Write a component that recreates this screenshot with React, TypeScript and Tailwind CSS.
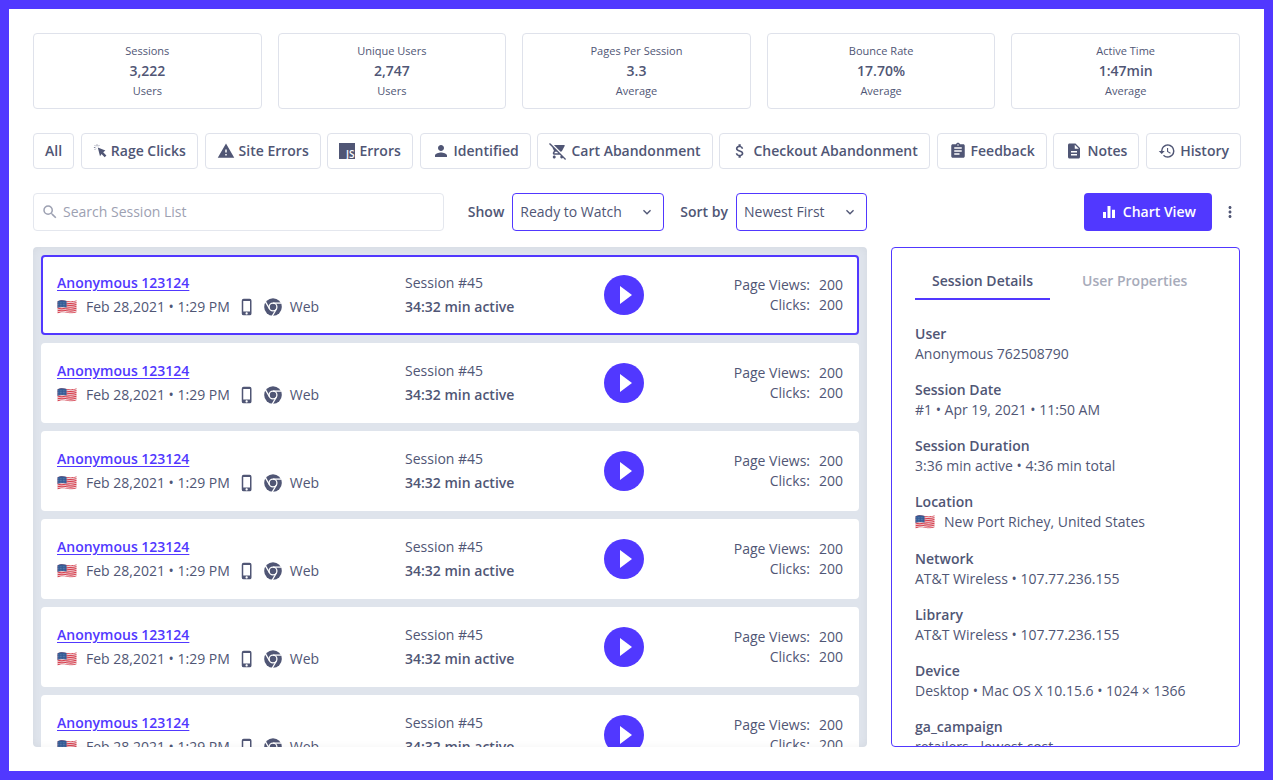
import React from "react";
import {
  MdWarning,
  MdPerson,
  MdRemoveShoppingCart,
  MdAttachMoney,
  MdAssignment,
  MdDescription,
  MdHistory,
  MdSearch,
  MdEqualizer,
  MdMoreVert,
  MdPhoneIphone,
  MdExpandMore,
} from "react-icons/md";

function RageIcon() {
  return (
    <svg width="14" height="16" viewBox="0 0 14 16" aria-hidden="true">
      <path
        d="M4.800 4.400 12.400 7.600 10.200 9.200 13.400 12.600 11.700 14.300 8.500 11 7 13.300Z"
        fill="currentColor"
      />
      <path
        d="M4 1.400v1.500M1.800 2.300l1 1M.9 4.500h1.500M6.200 2.300l-1 1M1.800 6.700l1-1"
        stroke="currentColor"
        strokeWidth=".7"
        fill="none"
      />
    </svg>
  );
}

function JsIcon() {
  return (
    <svg width="16" height="16" viewBox="0 0 16 16" aria-hidden="true">
      <rect width="16" height="16" fill="currentColor" />
      <text
        x="15.500"
        y="14.800"
        textAnchor="end"
        fontSize="10"
        fontWeight="600"
        fontFamily="'Open Sans', sans-serif"
        fill="#fff"
      >
        JS
      </text>
    </svg>
  );
}

function ChromeIcon() {
  return (
    <svg width="18" height="18" viewBox="0 0 18 18" className="ml-2" aria-hidden="true">
      <circle cx="9" cy="9" r="8.800" fill="currentColor" />
      <circle cx="9" cy="9" r="3.900" fill="none" stroke="#fff" strokeWidth="1.300" />
      <g stroke="#fff" strokeWidth="1.300">
        <path d="M9 5.100H17.500" />
        <path d="M9 5.100H17.500" transform="rotate(120 9 9)" />
        <path d="M9 5.100H17.500" transform="rotate(240 9 9)" />
      </g>
    </svg>
  );
}

function FlagIcon() {
  return (
    <svg width="20" height="16" viewBox="0 0 20 16" role="img" aria-label="United States">
      <clipPath id="flag-wave">
        <path d="M.5 2.400C4 .8 6.500 1.400 10 2S16 2.600 19.500 1.200V13.300C16 14.800 13.500 14.400 10 13.800S4 13 .5 14.600Z" />
      </clipPath>
      <g clipPath="url(#flag-wave)">
        <rect width="20" height="16" fill="#f0e2e4" />
        <g stroke="#d8404f" strokeWidth="1.100" fill="none">
          <path d="M0 2.500C4 .9 6.500 1.700 10 2.300S16 3 20 1.500" />
          <path d="M0 4.400C4 2.800 6.500 3.600 10 4.200S16 4.900 20 3.400" />
          <path d="M0 6.300C4 4.700 6.500 5.500 10 6.100S16 6.800 20 5.300" />
          <path d="M0 8.200C4 6.600 6.500 7.400 10 8S16 8.700 20 7.200" />
          <path d="M0 10.100C4 8.500 6.500 9.300 10 9.900S16 10.600 20 9.100" />
          <path d="M0 12C4 10.400 6.500 11.200 10 11.800S16 12.500 20 11" />
          <path d="M0 14C4 12.400 6.500 13.200 10 13.700S16 14.400 20 12.900" />
        </g>
        <path d="M0 0H9.500V8.600C6.500 8 4 7.700 0 9.100Z" fill="#345b95" />
        <path
          d="M1.500 3.800h7M1.500 5.500h7M1.500 7.200h7"
          stroke="#8fa9cc"
          strokeWidth=".5"
          strokeDasharray=".7 .8"
        />
      </g>
    </svg>
  );
}

const stats = [
  ["Sessions", "3,222", "Users"],
  ["Unique Users", "2,747", "Users"],
  ["Pages Per Session", "3.3", "Average"],
  ["Bounce Rate", "17.70%", "Average"],
  ["Active Time", "1:47min", "Average"],
];

const filters: { label: string; icon?: React.ReactNode }[] = [
  { label: "All" },
  { label: "Rage Clicks", icon: <RageIcon /> },
  { label: "Site Errors", icon: <MdWarning size={18} /> },
  { label: "Errors", icon: <JsIcon /> },
  { label: "Identified", icon: <MdPerson size={18} /> },
  { label: "Cart Abandonment", icon: <MdRemoveShoppingCart size={18} /> },
  { label: "Checkout Abandonment", icon: <MdAttachMoney size={18} /> },
  { label: "Feedback", icon: <MdAssignment size={18} /> },
  { label: "Notes", icon: <MdDescription size={18} /> },
  { label: "History", icon: <MdHistory size={18} /> },
];

const details: { label: string; value: string; flag?: boolean }[] = [
  { label: "User", value: "Anonymous 762508790" },
  { label: "Session Date", value: "#1 • Apr 19, 2021 • 11:50 AM" },
  { label: "Session Duration", value: "3:36 min active • 4:36 min total" },
  { label: "Location", value: "New Port Richey, United States", flag: true },
  { label: "Network", value: "AT&T Wireless • 107.77.236.155" },
  { label: "Library", value: "AT&T Wireless • 107.77.236.155" },
  { label: "Device", value: "Desktop • Mac OS X 10.15.6 • 1024 × 1366" },
  { label: "ga_campaign", value: "retailers - lowest cost" },
];

function Picker({ id, label, value }: { id: string; label: string; value: string }) {
  return (
    <div className="flex shrink-0 items-center gap-2">
      <label htmlFor={id} className="font-semibold">
        {label}
      </label>
      <div className="relative">
        <select
          id={id}
          defaultValue={value}
          className="h-[38px] appearance-none rounded border border-[#5138ff] bg-white pr-[41px] pl-[7px]"
        >
          <option>{value}</option>
        </select>
        <MdExpandMore size={16} className="pointer-events-none absolute top-[11px] right-[9px]" />
      </div>
    </div>
  );
}

function SessionCard({ selected }: { selected: boolean }) {
  return (
    <li
      className={`grid h-20 shrink-0 grid-cols-[348fr_199fr_239fr] items-center rounded border-2 bg-white px-[14px] ${
        selected ? "border-[#5138ff]" : "border-white"
      }`}
    >
      <div className="leading-6">
        <a href="#session" className="font-semibold text-[#5138ff] underline underline-offset-2">
          Anonymous 123124
        </a>
        <div className="flex items-center">
          <FlagIcon />
          <span className="ml-[9px]">Feb 28,2021 • 1:29 PM</span>
          <MdPhoneIphone size={18} className="ml-2" />
          <ChromeIcon />
          <span className="ml-2">Web</span>
        </div>
      </div>
      <div className="leading-6">
        <p>Session #45</p>
        <p className="font-semibold">34:32 min active</p>
      </div>
      <div className="flex items-center justify-between">
        <button
          type="button"
          aria-label="Play session"
          className="flex size-10 items-center justify-center rounded-full bg-[#5138ff] text-white"
        >
          <svg width="40" height="40" viewBox="0 0 40 40" aria-hidden="true">
            <path d="M16 11 28 20 16 29Z" fill="currentColor" />
          </svg>
        </button>
        <dl className="grid grid-cols-[auto_auto] gap-x-[9px] text-right leading-5">
          <dt>Page Views:</dt>
          <dd>200</dd>
          <dt>Clicks:</dt>
          <dd>200</dd>
        </dl>
      </div>
    </li>
  );
}

export default function App() {
  return (
    <main className="flex h-screen flex-col border-[9px] border-[#5138ff] bg-white py-6 pr-[23px] pl-6 font-['Open_Sans',sans-serif] text-sm text-[#505675]">
      <section className="mr-px grid grid-cols-5 gap-4">
        {stats.map(([title, value, unit]) => (
          <div
            key={title}
            className="flex h-[76px] flex-col items-center justify-center rounded border border-[#dfe2eb] text-[11px] leading-5"
          >
            <p>{title}</p>
            <p className="text-sm leading-5 font-semibold">{value}</p>
            <p>{unit}</p>
          </div>
        ))}
      </section>

      <nav className="mt-6 flex justify-between">
        {filters.map(({ label, icon }) => (
          <button
            key={label}
            type="button"
            className="flex h-9 items-center gap-1 rounded border border-[#dfe2eb] px-[11px] font-semibold whitespace-nowrap"
          >
            {icon}
            {label}
          </button>
        ))}
      </nav>

      <div className="mt-6 mr-px grid min-h-0 flex-1 grid-cols-[834fr_349fr] grid-rows-[auto_minmax(0,1fr)] gap-x-6 gap-y-4">
        <div className="flex items-center">
          <label className="mr-6 flex h-[38px] min-w-0 flex-1 items-center gap-1 rounded border border-[#e4e7ee] pl-[7px] text-[#9da1b2]">
            <MdSearch size={18} />
            <input
              type="search"
              aria-label="Search Session List"
              placeholder="Search Session List"
              className="min-w-0 flex-1 bg-transparent outline-none placeholder:text-[#9da1b2]"
            />
          </label>
          <Picker id="show" label="Show" value="Ready to Watch" />
          <div className="w-4 shrink-0" />
          <Picker id="sort" label="Sort by" value="Newest First" />
        </div>

        <div className="flex items-center justify-end gap-[9px] pr-px">
          <button
            type="button"
            className="flex h-[38px] items-center gap-[5px] rounded bg-[#5138ff] px-4 font-semibold text-white"
          >
            <MdEqualizer size={18} />
            Chart View
          </button>
          <button type="button" aria-label="More options">
            <MdMoreVert size={18} />
          </button>
        </div>

        <ul className="relative flex flex-col gap-2 overflow-hidden rounded bg-[#dfe4ec] p-2 after:pointer-events-none after:absolute after:inset-0 after:rounded after:shadow-[inset_0_0_8px_rgba(0,0,0,0.05)]">
          {[0, 1, 2, 3, 4, 5].map((n) => (
            <SessionCard key={n} selected={n === 0} />
          ))}
        </ul>

        <aside className="overflow-hidden rounded border border-[#5138ff] px-[23px] pt-[23px]">
          <div role="tablist" className="flex gap-[15px] leading-5 font-semibold">
            <button
              type="button"
              role="tab"
              aria-selected="true"
              className="border-b-2 border-[#5138ff] px-[17px] pb-[7px]"
            >
              Session Details
            </button>
            <button
              type="button"
              role="tab"
              aria-selected="false"
              className="border-b-2 border-transparent px-[17px] pb-[7px] text-[#a7abba]"
            >
              User Properties
            </button>
          </div>
          <dl className="mt-6 flex flex-col gap-4 leading-5">
            {details.map(({ label, value, flag }) => (
              <div key={label}>
                <dt className="font-semibold">{label}</dt>
                <dd className={flag ? "flex items-center gap-[9px] pb-px" : ""}>
                  {flag && <FlagIcon />}
                  {value}
                </dd>
              </div>
            ))}
          </dl>
        </aside>
      </div>
    </main>
  );
}
